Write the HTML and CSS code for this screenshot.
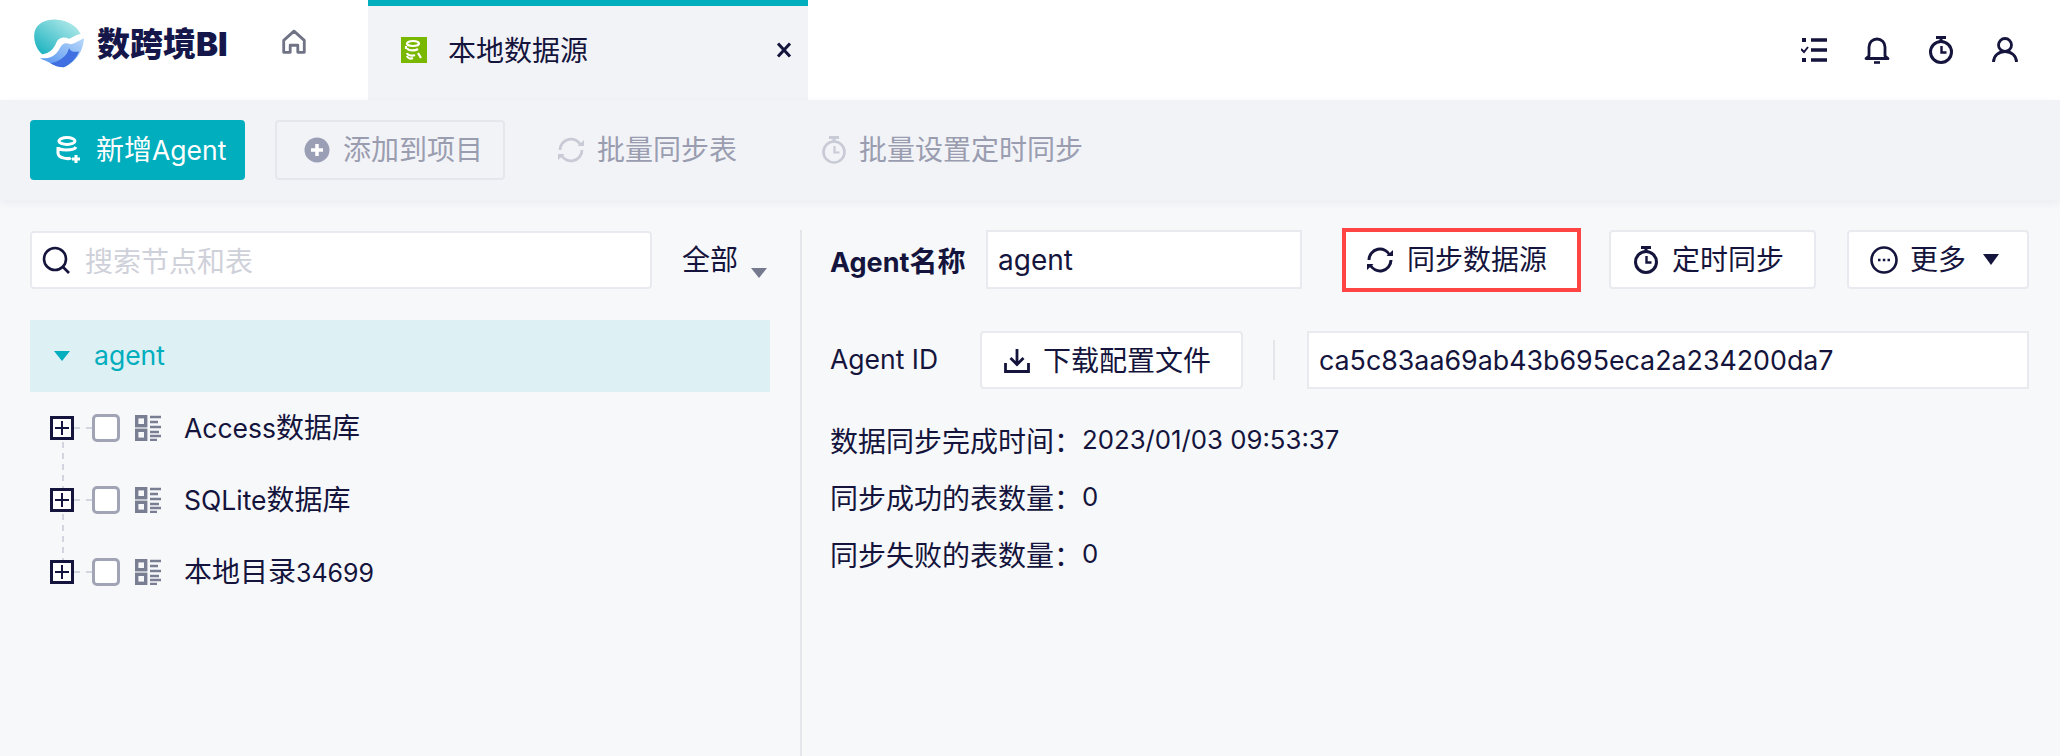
FILE: index.html
```html
<!DOCTYPE html>
<html lang="zh-CN">
<head>
<meta charset="utf-8">
<title>本地数据源</title>
<link rel="stylesheet" href="styles.css">
</head>
<body>
<div class="app">
  <header class="topbar">
    <div class="logo">
      <svg class="logo-mark" viewBox="98 50 155 155" width="52" height="52">
        <defs>
          <linearGradient id="lg1" x1="0" y1="1" x2="1" y2="0"><stop offset="0" stop-color="#10aebd"/><stop offset="1" stop-color="#c4f0ee"/></linearGradient>
          <linearGradient id="lg2" x1="1" y1="0" x2="0" y2="1"><stop offset="0" stop-color="#b9d9fa"/><stop offset="1" stop-color="#4f8fee"/></linearGradient>
        </defs>
        <path d="M125 158C105 140 98 110 103 90 110 65 140 52 170 55 205 58 230 75 240 98 225 100 215 110 205 112 190 105 175 108 168 122 160 142 148 155 125 158Z" fill="url(#lg1)"/>
        <path d="M118 170C145 172 165 165 178 140 185 125 195 122 210 128 225 125 238 115 250 110 248 140 235 175 190 197 170 195 160 190 150 185 140 178 128 175 118 170Z" fill="url(#lg2)"/>
        <path d="M150 185C175 180 200 165 205 140 215 155 225 150 235 150 225 175 205 190 190 197 175 197 160 192 150 185Z" fill="#3f6fe0"/>
      </svg>
      <span class="logo-text">数跨境BI</span>
    </div>
    <svg class="home" viewBox="0 0 24 24" width="26" height="26"><path d="M2.500 10.500 12 2l9.500 8.500V21.500h-6v-6.500h-7V21.500h-6z" fill="none" stroke="#6f7385" stroke-width="2.600" stroke-linejoin="round"/></svg>
    <div class="tab">
      <svg class="tab-icon" viewBox="0 0 26 26" width="26" height="26"><rect width="26" height="26" fill="#7ab800"/><g fill="none" stroke="#fff" stroke-width="2.200"><ellipse cx="12" cy="6.500" rx="6" ry="2.500"/><path d="M6 11c1 3 8 3 11 1M6 16c1 3 6 3 8 2M5 9v3M6 19c1 3 4 3 6 2M17 16l3 5"/></g></svg>
      <span class="tab-title">本地数据源</span>
      <svg class="tab-close" viewBox="0 0 16 16" width="16" height="16"><path d="M2 1.500 14 14.500M14 1.500 2 14.500" stroke="#14143c" stroke-width="3"/></svg>
    </div>
    <div class="top-icons">
      <svg viewBox="0 0 26 26" width="26" height="26"><g stroke="#14143c" stroke-width="3.600" fill="none"><path d="M10 3h16M10 13h16M10 23h16"/><path d="M3 1v4M3 21v4" stroke-width="4"/></g><path d="M0 12l3 3 4-5" stroke="#14143c" stroke-width="2" fill="none"/></svg>
      <svg viewBox="0 0 26 28" width="26" height="28"><path d="M5 20V11a8 8 0 0 1 16 0v9l3 2.500H2z" fill="none" stroke="#14143c" stroke-width="2.800" stroke-linejoin="round"/><path d="M10 26.500h6" stroke="#14143c" stroke-width="2.600"/></svg>
      <svg viewBox="0 0 28 28" width="28" height="28"><circle cx="14" cy="16" r="10.500" fill="none" stroke="#14143c" stroke-width="3"/><path d="M9 1.500h10M14 2v3" stroke="#14143c" stroke-width="3"/><path d="M14.500 10v6.500h5" fill="none" stroke="#14143c" stroke-width="2.400"/></svg>
      <svg viewBox="0 0 26 26" width="26" height="26"><circle cx="13" cy="8" r="6.500" fill="none" stroke="#14143c" stroke-width="2.800"/><path d="M1.500 25c0-6 5-10.500 11.500-10.500S24.500 19 24.500 25" fill="none" stroke="#14143c" stroke-width="2.800"/></svg>
    </div>
  </header>

  <div class="toolbar">
    <button class="tbtn primary">
      <svg viewBox="0 0 28 28" width="28" height="28"><g fill="none" stroke="#fff" stroke-width="3"><ellipse cx="12" cy="5" rx="8" ry="3.500"/><path d="M3 11c0 4 16 4 18 0M3 17c0 6 12 6 13 5M3 11v6"/><path d="M21 19v8M17 23h8"/></g></svg>
      <span>新增<span class="latin">Agent</span></span>
    </button>
    <button class="tbtn outlined">
      <svg viewBox="0 0 26 26" width="26" height="26"><circle cx="13" cy="13" r="12.500" fill="#9a9fb5"/><path d="M13 7v12M7 13h12" stroke="#fff" stroke-width="3.500"/></svg>
      <span>添加到项目</span>
    </button>
    <button class="tbtn ghost g1">
      <svg viewBox="0 0 28 28" width="28" height="28"><g fill="none" stroke="#c8cbd5" stroke-width="2.800"><path d="M3 14A11 11 0 0 1 24 9.500"/><path d="M25 14A11 11 0 0 1 4 18.500"/></g><path d="M20.500 10h6.500V4zM7.500 18H1v6z" fill="#c8cbd5"/></svg>
      <span>批量同步表</span>
    </button>
    <button class="tbtn ghost g2">
      <svg viewBox="0 0 26 28" width="26" height="28"><circle cx="13" cy="16" r="10.500" fill="none" stroke="#c8cbd5" stroke-width="2.600"/><path d="M8 1.500h10M13 2v3" stroke="#c8cbd5" stroke-width="3"/><path d="M13.500 10v6.500h5" fill="none" stroke="#c8cbd5" stroke-width="2.200"/></svg>
      <span>批量设置定时同步</span>
    </button>
  </div>

  <main class="main">
    <section class="left">
      <div class="search-row">
        <div class="search">
          <svg viewBox="0 0 28 28" width="28" height="28"><circle cx="13" cy="13" r="11" fill="none" stroke="#14143c" stroke-width="2.600"/><path d="M21 21l6 6" stroke="#14143c" stroke-width="2.600"/></svg>
          <span class="placeholder">搜索节点和表</span>
        </div>
        <div class="filter"><span class="filter-text">全部</span><i class="caret-grey"></i></div>
      </div>
      <div class="tree-root"><i class="caret-teal"></i><span>agent</span></div>
      <ul class="tree">
        <li class="node">
          <span class="plus"></span><span class="dash"></span><span class="check"></span>
          <svg class="db" viewBox="0 0 26 26" width="26" height="26"><g fill="none" stroke="#7a7e92" stroke-width="3.400"><rect x="1.700" y="1.700" width="9" height="9"/><rect x="1.700" y="15.300" width="9" height="9"/><path d="M15 2h11M15 7h8M15 12h11M15 17h9M15 21h11M15 25h7" stroke-width="2.400"/></g></svg>
          <span class="label">Access<span class="cjk">数据库</span></span>
        </li>
        <li class="node">
          <span class="plus"></span><span class="dash"></span><span class="check"></span>
          <svg class="db" viewBox="0 0 26 26" width="26" height="26"><g fill="none" stroke="#7a7e92" stroke-width="3.400"><rect x="1.700" y="1.700" width="9" height="9"/><rect x="1.700" y="15.300" width="9" height="9"/><path d="M15 2h11M15 7h8M15 12h11M15 17h9M15 21h11M15 25h7" stroke-width="2.400"/></g></svg>
          <span class="label">SQLite<span class="cjk">数据库</span></span>
        </li>
        <li class="node last">
          <span class="plus"></span><span class="dash"></span><span class="check"></span>
          <svg class="db" viewBox="0 0 26 26" width="26" height="26"><g fill="none" stroke="#7a7e92" stroke-width="3.400"><rect x="1.700" y="1.700" width="9" height="9"/><rect x="1.700" y="15.300" width="9" height="9"/><path d="M15 2h11M15 7h8M15 12h11M15 17h9M15 21h11M15 25h7" stroke-width="2.400"/></g></svg>
          <span class="label"><span class="cjk">本地目录</span><span class="digits">34699</span></span>
        </li>
      </ul>
    </section>

    <section class="right">
      <div class="form-row">
        <span class="name-label">Agent<span class="cjk">名称</span></span>
        <div class="field name-field">agent</div>
        <button class="btn sync">
          <svg viewBox="0 0 28 28" width="28" height="28"><g fill="none" stroke="#14143c" stroke-width="3"><path d="M3 14A11 11 0 0 1 24 9.500"/><path d="M25 14A11 11 0 0 1 4 18.500"/></g><path d="M20.500 10h6.500V4zM7.500 18H1v6z" fill="#14143c"/></svg>
          <span>同步数据源</span>
        </button>
        <button class="btn timer">
          <svg viewBox="0 0 26 28" width="26" height="28"><circle cx="13" cy="16" r="10.500" fill="none" stroke="#14143c" stroke-width="3"/><path d="M8 1.500h10M13 2v3" stroke="#14143c" stroke-width="3"/><path d="M13.500 10v6.500h5" fill="none" stroke="#14143c" stroke-width="2.400"/></svg>
          <span>定时同步</span>
        </button>
        <button class="btn more">
          <svg viewBox="0 0 28 28" width="28" height="28"><circle cx="14" cy="14" r="12.500" fill="none" stroke="#14143c" stroke-width="2.600"/><path d="M8 14h2.500M12.800 14h2.500M17.500 14H20" stroke="#14143c" stroke-width="2.600"/></svg>
          <span>更多</span>
          <i class="caret-dark"></i>
        </button>
      </div>
      <div class="form-row second">
        <span class="id-label">Agent ID</span>
        <button class="btn download">
          <svg viewBox="0 0 26 26" width="26" height="26"><path d="M13 2v15M6.500 11l6.500 6.500 6.500-6.500M1.500 16v8.500h23V16" fill="none" stroke="#14143c" stroke-width="2.800"/></svg>
          <span>下载配置文件</span>
        </button>
        <span class="vsep"></span>
        <div class="field id-field">ca5c83aa69ab43b695eca2a234200da7</div>
      </div>
      <dl class="info">
        <div class="info-row"><dt>数据同步完成时间：</dt><dd>2023/01/03 09:53:37</dd></div>
        <div class="info-row"><dt>同步成功的表数量：</dt><dd>0</dd></div>
        <div class="info-row"><dt>同步失败的表数量：</dt><dd>0</dd></div>
      </dl>
    </section>
  </main>
</div>
</body>
</html>
```
FILE: styles.css
```css
* { box-sizing: border-box; }
html, body { margin: 0; padding: 0; }
body {
  width: 2060px;
  height: 756px;
  overflow: hidden;
  font-family: Inter, "Noto Sans CJK SC", sans-serif;
  font-size: 26px;
  color: #14143c;
  background: #f7f8fa;
}
button { font: inherit; color: inherit; cursor: pointer; }
.app { display: flex; flex-direction: column; height: 756px; }
.cjk { font-size: 28px; }
.latin { font-size: 26.5px; }
.digits { font-size: 25px; }

.topbar { display: flex; height: 100px; background: #fff; flex: none; }
.logo { display: flex; align-items: center; width: 281px; padding: 0 0 12px 33px; flex: none; }
.logo-mark { flex: none; }
.logo-text {
  margin-left: 12px;
  font-size: 33px;
  font-weight: 900;
  line-height: 1;
  white-space: nowrap;
  color: #15174a;
}
.home { margin: 29px 0 0 0; flex: none; }
.tab {
  display: flex;
  align-items: center;
  width: 440px;
  margin-left: 61px;
  padding: 0 16px 6px 33px;
  background: #f2f3f7;
  border-top: 6px solid #00aebd;
  flex: none;
}
.tab-icon { flex: none; }
.tab-title { margin: 0 0 2px 21px; font-size: 28px; white-space: nowrap; }
.tab-close { margin-left: auto; flex: none; }
.top-icons { display: flex; align-items: center; gap: 37px; margin-left: auto; padding: 0 42px 0 0; }

.toolbar {
  display: flex;
  align-items: center;
  height: 100px;
  padding: 0 30px;
  background: #f2f3f7;
  box-shadow: 0 3px 8px rgba(40, 45, 80, .06);
  flex: none;
  position: relative;
}
.tbtn {
  display: flex;
  align-items: center;
  gap: 13px;
  height: 60px;
  padding: 0;
  font-size: 28px;
  white-space: nowrap;
  border: 0;
  background: none;
  color: #9a9db0;
}
.tbtn > span { margin-bottom: 4px; }
.primary { width: 215px; padding-left: 25px; background: #00aebd; color: #fff; border-radius: 4px; }
.outlined { width: 230px; margin-left: 30px; padding-left: 27px; border: 2px solid #e6e7ed; border-radius: 4px; }
.ghost { gap: 12px; }
.g1 { margin-left: 52px; }
.g2 { margin-left: 84px; }

.main { display: flex; flex: 1; padding-top: 30px; min-height: 0; }
.left { width: 802px; padding: 1px 30px 0; border-right: 2px solid #e5e6ec; flex: none; }
.search-row { display: flex; align-items: center; height: 58px; }
.search {
  display: flex;
  align-items: center;
  gap: 15px;
  width: 622px;
  height: 58px;
  padding-left: 10px;
  background: #fff;
  border: 2px solid #e9eaef;
  border-radius: 4px;
}
.placeholder { font-size: 28px; color: #cfd1da; }
.filter { display: flex; margin-left: 30px; font-size: 28px; }
.filter-text { margin-bottom: 5px; }
.caret-grey {
  margin: 30px 0 0 13px;
  width: 0; height: 0;
  border: 8px solid transparent;
  border-top: 10px solid #757a8e;
  border-bottom: 0;
}
.tree-root {
  display: flex;
  align-items: center;
  gap: 24px;
  height: 72px;
  margin-top: 31px;
  padding-left: 24px;
  background: #ddf0f4;
  color: #00aebd;
  font-size: 26.5px;
}
.tree-root span { margin-bottom: 2px; }
.caret-teal {
  width: 0; height: 0;
  border: 8px solid transparent;
  border-top: 10px solid #00aebd;
  border-bottom: 0;
}
.tree { list-style: none; margin: 0; padding: 0; }
.node { display: flex; align-items: center; height: 72px; padding-left: 20px; position: relative; }
.node:not(.last)::after {
  content: "";
  position: absolute;
  left: 32px;
  top: 50px;
  height: 50px;
  border-left: 2px dashed #d3d5de;
}
.plus {
  width: 24px; height: 24px;
  border: 3px solid #14143c;
  background:
    linear-gradient(#14143c, #14143c) center / 14px 2px no-repeat,
    linear-gradient(#14143c, #14143c) center / 2px 14px no-repeat,
    #fff;
  flex: none;
}
.dash { width: 18px; border-top: 2px dashed #d3d5de; flex: none; }
.check { width: 28px; height: 28px; border: 3px solid #a0a4b4; border-radius: 5px; background: #fff; flex: none; }
.db { margin-left: 15px; flex: none; }
.label { margin: 0 0 4px 23px; font-size: 26.5px; white-space: nowrap; }

.right { flex: 1; padding: 0 31px 0 28px; }
.form-row { display: flex; align-items: center; height: 59px; }
.second { margin-top: 42px; height: 58px; }
.name-label { width: 156px; font-size: 27px; font-weight: 700; white-space: nowrap; flex: none; }
.id-label { width: 150px; font-size: 26.5px; white-space: nowrap; flex: none; margin-bottom: 2px; }
.field {
  display: flex;
  align-items: center;
  height: 100%;
  padding-left: 10px;
  background: #fff;
  border: 2px solid #e9eaef;
  font-size: 26.8px;
}
.name-field { width: 316px; font-size: 28px; }
.id-field { flex: 1; }
.btn {
  display: flex;
  align-items: center;
  gap: 13px;
  height: 100%;
  padding: 0;
  background: #fff;
  border: 2px solid #e9eaef;
  border-radius: 4px;
  font-size: 28px;
  white-space: nowrap;
  flex: none;
}
.btn span { margin-bottom: 3px; }
.sync { width: 239px; height: 64px; margin-left: 40px; padding-left: 20px; border: 4px solid #ff4444; border-radius: 0; }
.timer { width: 207px; margin-left: 28px; padding-left: 22px; }
.more { width: 182px; margin-left: 31px; padding-left: 21px; gap: 12px; }
.caret-dark {
  margin-left: 5px;
  width: 0; height: 0;
  border: 8px solid transparent;
  border-top: 11px solid #14143c;
  border-bottom: 0;
}
.download { width: 263px; padding-left: 22px; }
.vsep { width: 2px; height: 40px; margin: 0 32px 0 30px; background: #e5e6ec; flex: none; }

.info { margin: 22px 0 0; }
.info-row { display: flex; align-items: center; height: 57px; }
.info-row dt { font-size: 28px; }
.info-row dd { margin: 0; font-size: 25.75px; }
```
